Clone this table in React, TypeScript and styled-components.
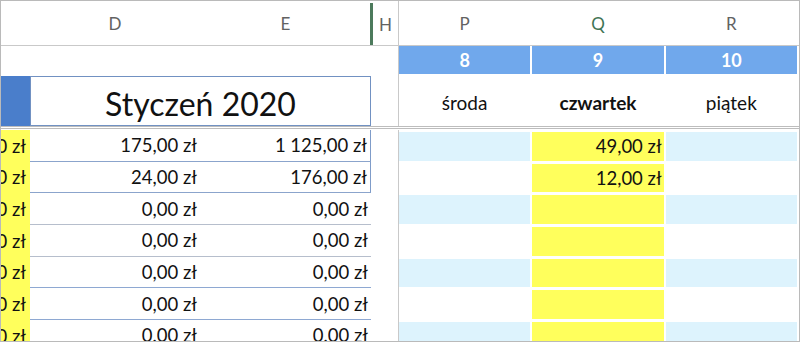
import styled, { createGlobalStyle } from "styled-components";

const GlobalStyle = createGlobalStyle`
  html, body {
    margin: 0;
    padding: 0;
    background: #ffffff;
  }
  body {
    font-family: Lato, "Open Sans", sans-serif;
    overflow: hidden;
  }
`;

// A | D | E | H | P Q R
const COLS = "29px 170px 171px 27px 1fr";

const Sheet = styled.div`
  width: 800px;
  height: 342px;
  box-sizing: border-box;
  border: 1px solid #bababa;
  background: #ffffff;
  overflow: hidden;
  display: flex;
  flex-direction: column;
`;

const HeaderRow = styled.div`
  flex-shrink: 0;
  display: grid;
  grid-template-columns: ${COLS};
  height: 44px;
  border-bottom: 1px solid #c9c9c9;
`;

const ColHead = styled.div<{ $active?: boolean; $marker?: boolean }>`
  display: flex;
  align-items: center;
  justify-content: center;
  font-size: 17px;
  color: ${(p) => (p.$active ? "#3f7455" : "#626262")};
  ${(p) =>
    p.$marker &&
    `
    margin-top: 2px;
    border-left: 3px solid #4c7a5c;
    margin-left: -1px;
  `}
`;

const RightPart = styled.div`
  display: grid;
  grid-template-columns: 1fr 1fr 1fr;
  column-gap: 2px;
  padding-right: 2px;
  border-left: 1px solid #c9c9c9;
`;

const Band = styled.div`
  flex-shrink: 0;
  display: grid;
  grid-template-columns: ${COLS};
  height: 80px;
  border-bottom: 3px double #bdbdbd;
`;

const MonthBlock = styled.div`
  grid-column: 1 / span 3;
  display: grid;
  grid-template-columns: 29px 1fr;
  grid-template-rows: 30px 50px;
`;

const MonthMarker = styled.div`
  grid-row: 2;
  grid-column: 1;
  background: #4a7ecb;
`;

const MonthTitle = styled.div`
  grid-row: 2;
  grid-column: 2;
  box-sizing: border-box;
  border: 1px solid #7191c2;
  display: flex;
  align-items: center;
  justify-content: center;
  padding-top: 4px;
  font-size: 32px;
  color: #111111;
`;

const DaysBlock = styled(RightPart)`
  grid-template-rows: 28px 52px;
`;

const DayNumber = styled.div`
  background: #70a8ec;
  color: #ffffff;
  font-weight: 700;
  font-size: 18px;
  display: flex;
  align-items: center;
  justify-content: center;
`;

const DayName = styled.div<{ $bold?: boolean }>`
  display: flex;
  align-items: center;
  justify-content: center;
  padding-top: 5px;
  font-size: 19px;
  font-weight: ${(p) => (p.$bold ? 700 : 400)};
  color: #111111;
`;

const Body = styled.div`
  padding-top: 1px;
  display: flex;
  flex-direction: column;
`;

const DataRow = styled.div`
  flex-shrink: 0;
  display: grid;
  grid-template-columns: ${COLS};
  height: 31.67px;
`;

const SumCell = styled.div`
  background: #ffff5c;
  overflow: hidden;
  white-space: nowrap;
  display: flex;
  align-items: center;
  justify-content: flex-end;
  padding-right: 4px;
  font-size: 18.5px;
  color: #111111;
`;

const Amount = styled.div<{ $line: string; $boxed?: boolean }>`
  box-sizing: border-box;
  display: flex;
  align-items: center;
  justify-content: flex-end;
  padding-right: 3px;
  font-size: 18.5px;
  color: #111111;
  white-space: nowrap;
  border-bottom: 1px solid ${(p) => p.$line};
  ${(p) => p.$boxed && "border-right: 1px solid #7f9cc9;"}
`;

const DayCells = styled(RightPart)`
  padding-top: 2px;
  padding-bottom: 1px;
`;

const DayCell = styled.div<{ $tone: "blue" | "white" | "yellow" }>`
  background: ${(p) =>
    p.$tone === "yellow" ? "#ffff5c" : p.$tone === "blue" ? "#ddf3fd" : "#ffffff"};
  display: flex;
  align-items: center;
  justify-content: flex-end;
  padding-right: 2px;
  font-size: 18.5px;
  color: #111111;
`;

type Row = {
  d: string;
  e: string;
  q?: string;
  line: string;
  boxed?: boolean;
};

const rows: Row[] = [
  { d: "175,00 zł", e: "1 125,00 zł", q: "49,00 zł", line: "#8ba4cc", boxed: true },
  { d: "24,00 zł", e: "176,00 zł", q: "12,00 zł", line: "#8ba4cc", boxed: true },
  { d: "0,00 zł", e: "0,00 zł", line: "#b6becc" },
  { d: "0,00 zł", e: "0,00 zł", line: "#b6becc" },
  { d: "0,00 zł", e: "0,00 zł", line: "#8ea8d2" },
  { d: "0,00 zł", e: "0,00 zł", line: "#8ea8d2" },
  { d: "0,00 zł", e: "0,00 zł", line: "#8ea8d2" },
];

const days = [
  { n: "8", name: "środa" },
  { n: "9", name: "czwartek", bold: true },
  { n: "10", name: "piątek" },
];

export default function App() {
  return (
    <>
      <GlobalStyle />
      <Sheet>
        <HeaderRow>
          <ColHead />
          <ColHead>D</ColHead>
          <ColHead>E</ColHead>
          <ColHead $marker>H</ColHead>
          <RightPart>
            <ColHead>P</ColHead>
            <ColHead $active>Q</ColHead>
            <ColHead>R</ColHead>
          </RightPart>
        </HeaderRow>

        <Band>
          <MonthBlock>
            <MonthMarker />
            <MonthTitle>Styczeń 2020</MonthTitle>
          </MonthBlock>
          <div />
          <DaysBlock>
            {days.map((d) => (
              <DayNumber key={d.n}>{d.n}</DayNumber>
            ))}
            {days.map((d) => (
              <DayName key={d.name} $bold={d.bold}>
                {d.name}
              </DayName>
            ))}
          </DaysBlock>
        </Band>

        <Body>
          {rows.map((r, i) => {
            const tone = i % 2 === 0 ? "blue" : "white";
            return (
              <DataRow key={i}>
                <SumCell>0,00 zł</SumCell>
                <Amount $line={r.line}>{r.d}</Amount>
                <Amount $line={r.line} $boxed={r.boxed}>
                  {r.e}
                </Amount>
                <div />
                <DayCells>
                  <DayCell $tone={tone} />
                  <DayCell $tone="yellow">{r.q}</DayCell>
                  <DayCell $tone={tone} />
                </DayCells>
              </DataRow>
            );
          })}
        </Body>
      </Sheet>
    </>
  );
}
